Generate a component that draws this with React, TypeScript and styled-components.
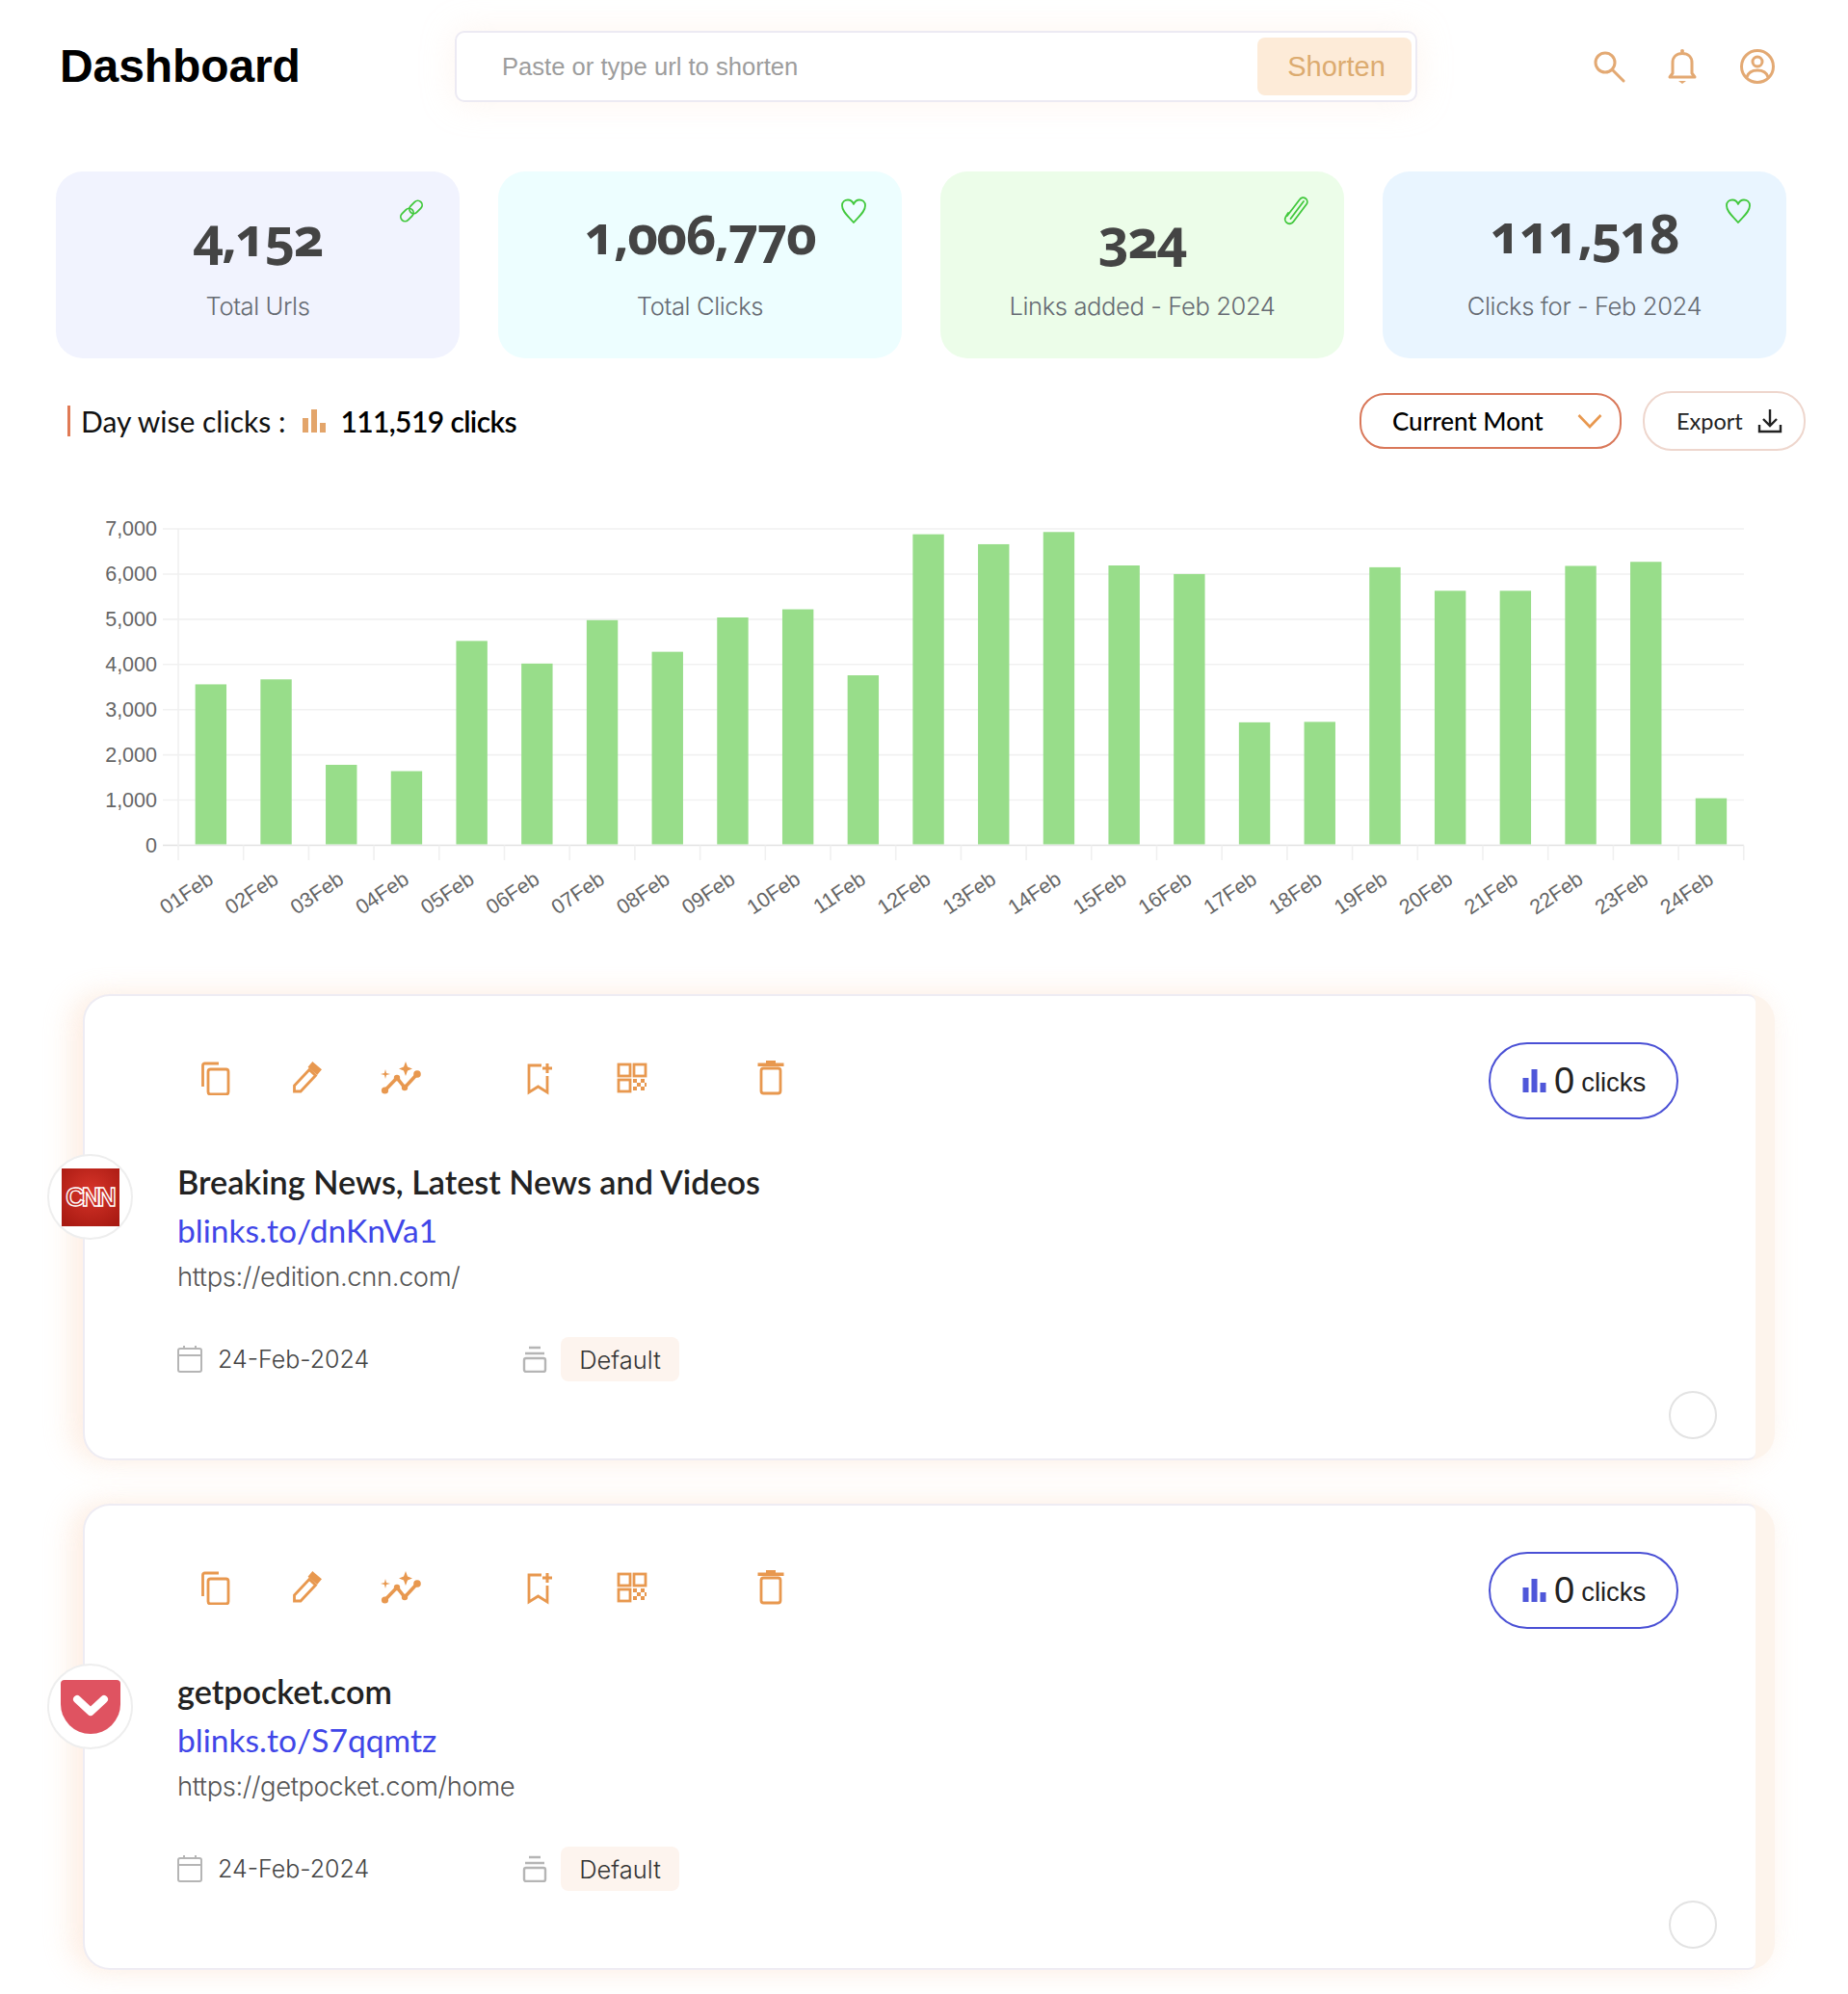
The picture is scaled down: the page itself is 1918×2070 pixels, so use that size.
import React from 'react'
import styled, { createGlobalStyle } from 'styled-components'

const GlobalStyle = createGlobalStyle`
  html, body { margin: 0; padding: 0; background: #fff; }
  * { box-sizing: border-box; }
  body { font-family: "Inter", "Liberation Sans", sans-serif; }
`

const ORANGE = '#e8984f'
const SOFT = '#e3a973'
const GREEN = '#41c83c'

const chartValues = [3560, 3670, 1780, 1640, 4520, 4020, 4980, 4280, 5040, 5220, 3760, 6880, 6660, 6930, 6190, 6000, 2720, 2730, 6150, 5630, 5630, 6180, 6270, 1040]

const stats = [
  { value: '4,152', label: 'Total Urls', bg: '#f1f3fe', icon: 'link', shift: 0 },
  { value: '1,006,770', label: 'Total Clicks', bg: '#edfeff', icon: 'heart', shift: -2 },
  { value: '324', label: 'Links added - Feb 2024', bg: '#ecfde9', icon: 'clip', shift: 2 },
  { value: '111,518', label: 'Clicks for - Feb 2024', bg: '#e9f5ff', icon: 'heart', shift: -3 },
]

const links = [
  { title: 'Breaking News, Latest News and Videos', short: 'blinks.to/dnKnVa1', url: 'https://edition.cnn.com/', logo: 'cnn' },
  { title: 'getpocket.com', short: 'blinks.to/S7qqmtz', url: 'https://getpocket.com/home', logo: 'pocket' },
]

function StatIcon({ kind }: { kind: string }) {
  if (kind === 'link') {
    return (
      <svg width="30" height="30" viewBox="0 0 30 30" fill="none" stroke={GREEN} strokeWidth="1.8">
        <rect x="3" y="14.5" width="15" height="9" rx="4.5" transform="rotate(-45 10.5 19)" />
        <rect x="12" y="6.5" width="15" height="9" rx="4.5" transform="rotate(-45 19.5 11)" />
      </svg>
    )
  }
  if (kind === 'clip') {
    return (
      <svg width="30" height="30" viewBox="0 0 30 30" fill="none" stroke={GREEN} strokeWidth="1.8" strokeLinecap="round">
        <path d="M7 17 L4.5 21 a4.6 4.6 0 0 0 8 5 L26 8 a4 4 0 0 0 -7 -5 L6 20" />
        <path d="M9.5 23 L23 5" />
      </svg>
    )
  }
  return (
    <svg width="30" height="30" viewBox="0 0 30 30" fill="none" stroke={GREEN} strokeWidth="1.8" strokeLinejoin="round">
      <path d="M15 27 C9 20 3 15.5 3 9.5 C3 5.5 6 3.5 9 3.5 C12 3.5 14 5.5 15 8 C16 5.5 18 3.5 21 3.5 C24 3.5 27 5.5 27 9.5 C27 15.5 21 20 15 27 Z" />
    </svg>
  )
}

function BarsIcon({ color, width, height }: { color: string; width: number; height: number }) {
  return (
    <svg width={width} height={height} viewBox="0 0 24 24" fill={color}>
      <rect x="0" y="9" width="6" height="15" />
      <rect x="9" y="0" width="6" height="24" />
      <rect x="18" y="14" width="6" height="10" />
    </svg>
  )
}

function ActionIcon({ kind }: { kind: string }) {
  const common = { width: 34, height: 36, viewBox: '0 0 34 36', fill: 'none', stroke: ORANGE, strokeWidth: 2.8 }
  switch (kind) {
    case 'copy':
      return (
        <svg {...common}>
          <path d="M3.5 27 V5 A2 2 0 0 1 5.5 3 H20" />
          <rect x="9" y="9" width="21" height="26" rx="2.5" />
        </svg>
      )
    case 'edit':
      return (
        <svg {...common}>
          <path d="M4.5 26 L20 9.5 L26.5 15.5 L11 32 H4.5 Z" />
          <path d="M23.5 3 L31 9.5 L28 13 L20.5 6.5 Z" fill={ORANGE} />
        </svg>
      )
    case 'spark':
      return (
        <svg {...common} width={44} viewBox="0 0 44 36" strokeWidth={3.6}>
          <path d="M4.5 31 L17 18 L25 28 L38 14" />
          <circle cx="4.5" cy="31" r="3.6" fill={ORANGE} stroke="none" />
          <circle cx="17" cy="18" r="3.2" fill={ORANGE} stroke="none" />
          <circle cx="25" cy="28" r="3.2" fill={ORANGE} stroke="none" />
          <circle cx="38" cy="14" r="3.8" fill={ORANGE} stroke="none" />
          <path d="M26 1 L28 6.5 L33 8.5 L28 10.5 L26 16 L24 10.5 L19 8.5 L24 6.5 Z" fill={ORANGE} stroke="none" />
          <path d="M5 9 L6 13 L10 14 L6 15 L5 19 L4 15 L0 14 L4 13 Z" fill={ORANGE} stroke="none" />
        </svg>
      )
    case 'bookmark':
      return (
        <svg {...common}>
          <path d="M18 5 H5 V33 L14.5 27 L24 33 V16" />
          <path d="M24 3 V13 M19 8 H29" strokeWidth={3} />
        </svg>
      )
    case 'qr':
      return (
        <svg {...common} width={32} viewBox="0 0 32 36">
          <rect x="2" y="4" width="12" height="12" />
          <rect x="18" y="4" width="12" height="12" />
          <rect x="2" y="20" width="12" height="12" />
          <path d="M17 19h4v4h-4zM25 19h4v4h-4zM21 23h4v4h-4zM17 27h4v4h-4zM25 27h4v4h-4zM29 23h2v4h-2z" fill={ORANGE} stroke="none" />
        </svg>
      )
    default:
      return (
        <svg {...common}>
          <rect x="7" y="8" width="20" height="26" rx="2.5" />
          <rect x="3.5" y="2.5" width="27" height="3.5" fill={ORANGE} stroke="none" />
          <rect x="12" y="0" width="10" height="3" fill={ORANGE} stroke="none" />
        </svg>
      )
  }
}

function CnnLogo() {
  return (
    <svg width="60" height="60" viewBox="0 0 60 60">
      <defs>
        <radialGradient id="cnnRed" cx="50%" cy="40%" r="70%">
          <stop offset="0%" stopColor="#d8352a" />
          <stop offset="100%" stopColor="#a81a12" />
        </radialGradient>
      </defs>
      <rect width="60" height="60" fill="url(#cnnRed)" />
      <text x="29" y="39" textAnchor="middle" fontFamily="Liberation Sans, sans-serif" fontWeight="700" fontSize="27" letterSpacing="-3" fill="none" stroke="#fff" strokeWidth="1.4">
        CNN
      </text>
    </svg>
  )
}

function PocketLogo() {
  return (
    <svg width="62" height="56" viewBox="0 0 62 56">
      <path d="M4 0 H58 A4 4 0 0 1 62 4 V25 A31 31 0 0 1 0 25 V4 A4 4 0 0 1 4 0 Z" fill="#df5361" />
      <path d="M17 20 L31 33 L45 20" fill="none" stroke="#fff" strokeWidth="8" strokeLinecap="round" strokeLinejoin="round" />
    </svg>
  )
}

function Chart() {
  const left = 185
  const step = 67.7
  const top = 549
  const bottom = 877.5
  const y = (v: number) => bottom - (v / 7000) * (bottom - top)
  return (
    <ChartSvg viewBox="0 530 1918 430" width="1918" height="430">
      {[0, 1000, 2000, 3000, 4000, 5000, 6000, 7000].map((v) => (
        <g key={v}>
          <line x1={169} x2={1810} y1={y(v)} y2={y(v)} stroke={v === 0 ? '#e2e2e2' : '#f1f1f1'} strokeWidth="1.6" />
          <text x={163} y={y(v) + 7} textAnchor="end" fontSize="21.5" fill="#666">
            {v.toLocaleString('en-US')}
          </text>
        </g>
      ))}
      {Array.from({ length: 25 }).map((_, i) => (
        <line key={i} x1={left + i * step} x2={left + i * step} y1={i === 0 ? top : bottom} y2={893} stroke="#f0f0f0" strokeWidth="1.6" />
      ))}
      {chartValues.map((v, i) => {
        const cx = left + step * i + step / 2
        const day = String(i + 1).padStart(2, '0')
        return (
          <g key={day}>
            <rect x={cx - 16.2} y={y(v)} width="32.4" height={bottom - y(v) - 1} fill="#98dd8a" />
            <text x={cx + 4} y={916} textAnchor="end" fontSize="21.5" fill="#666" transform={`rotate(-34 ${cx + 4} 916)`}>
              {day}Feb
            </text>
          </g>
        )
      })}
    </ChartSvg>
  )
}

export default function App() {
  return (
    <Page>
      <GlobalStyle />
      <Header>
        <Title>Dashboard</Title>
        <SearchBox>
          <Placeholder>Paste or type url to shorten</Placeholder>
          <ShortenButton>Shorten</ShortenButton>
        </SearchBox>
        <HeaderIcons>
          <svg width="34" height="34" viewBox="0 0 34 34" fill="none" stroke={SOFT} strokeWidth="3" strokeLinecap="round">
            <circle cx="13" cy="13" r="10" />
            <path d="M20.5 20.5 L32 32" />
          </svg>
          <svg width="32" height="38" viewBox="0 0 32 38" fill="none" stroke={SOFT} strokeWidth="3" strokeLinejoin="round">
            <path d="M3 30 H29 L26 26 V15 C26 9 22 5.5 16 5.5 C10 5.5 6 9 6 15 V26 Z" />
            <circle cx="16" cy="3" r="2" fill={SOFT} stroke="none" />
            <path d="M12 34 H20 L16 37 Z" fill={SOFT} stroke="none" />
          </svg>
          <svg width="38" height="38" viewBox="0 0 38 38" fill="none" stroke={SOFT} strokeWidth="3">
            <circle cx="19" cy="19" r="16.5" />
            <circle cx="19" cy="14" r="5" />
            <path d="M8 30 C10 24 14 23 19 23 C24 23 28 24 30 30" />
          </svg>
        </HeaderIcons>
      </Header>

      <StatGrid>
        {stats.map((s) => (
          <StatCard key={s.label} $bg={s.bg}>
            <StatIconSlot>
              <StatIcon kind={s.icon} />
            </StatIconSlot>
            <StatValue $shift={s.shift}>{s.value}</StatValue>
            <StatLabel>{s.label}</StatLabel>
          </StatCard>
        ))}
      </StatGrid>

      <ChartHead>
        <ChartTitle>
          <span>Day wise clicks :</span>
          <BarsIcon color="#e3a56b" width={24} height={24} />
          <strong>111,519 clicks</strong>
        </ChartTitle>
        <ChartActions>
          <MonthSelect>
            Current Mont
            <svg width="26" height="16" viewBox="0 0 26 16" fill="none" stroke={ORANGE} strokeWidth="2.6">
              <path d="M1.5 2 L13 14 L24.5 2" />
            </svg>
          </MonthSelect>
          <ExportButton>
            Export
            <svg width="26" height="26" viewBox="0 0 26 26" fill="none" stroke="#222" strokeWidth="2.4">
              <path d="M13 1 V17 M6 11 L13 18 L20 11 M2 17 V24 H24 V17" />
            </svg>
          </ExportButton>
        </ChartActions>
      </ChartHead>

      <Chart />

      <LinkList>
        {links.map((l) => (
          <LinkCard key={l.short}>
            <LinkInner>
              <Avatar>{l.logo === 'cnn' ? <CnnLogo /> : <PocketLogo />}</Avatar>
              <TopRow>
                <Actions>
                  <ActionSlot $w={94}><ActionIcon kind="copy" /></ActionSlot>
                  <ActionSlot $w={94}><ActionIcon kind="edit" /></ActionSlot>
                  <ActionSlot $w={149}><ActionIcon kind="spark" /></ActionSlot>
                  <ActionSlot $w={96}><ActionIcon kind="bookmark" /></ActionSlot>
                  <ActionSlot $w={143}><ActionIcon kind="qr" /></ActionSlot>
                  <ActionSlot $w={34}><ActionIcon kind="trash" /></ActionSlot>
                </Actions>
                <ClicksPill>
                  <BarsIcon color="#4f57d9" width={25} height={24} />
                  <ClickCount>0</ClickCount>
                  <ClickWord>clicks</ClickWord>
                </ClicksPill>
              </TopRow>
              <LinkTitle>{l.title}</LinkTitle>
              <ShortLink>{l.short}</ShortLink>
              <LongUrl>{l.url}</LongUrl>
              <MetaRow>
                <DateCell>
                  <svg width="26" height="28" viewBox="0 0 26 28" fill="none" stroke="#b5b5b5" strokeWidth="2">
                    <rect x="1" y="3" width="24" height="24" rx="2" />
                    <path d="M1 10 H25 M7 0 V3 M19 0 V3" />
                  </svg>
                  <DateText>24-Feb-2024</DateText>
                </DateCell>
                <svg width="26" height="28" viewBox="0 0 26 28" fill="none" stroke="#b5b5b5" strokeWidth="2.4">
                  <rect x="2" y="13" width="22" height="14" rx="2" />
                  <path d="M3 8 H23 M7 2 H19" />
                </svg>
                <Chip>Default</Chip>
              </MetaRow>
              <RadioDot />
            </LinkInner>
          </LinkCard>
        ))}
      </LinkList>
    </Page>
  )
}

const Page = styled.div`
  width: 1918px;
  height: 2070px;
  overflow: hidden;
  background: #fff;
`

const Header = styled.header`
  display: flex;
  align-items: center;
  height: 74px;
  margin-top: 32px;
  padding-left: 62px;
`

const Title = styled.h1`
  width: 410px;
  margin: -2px 0 0;
  font-family: "Liberation Sans", sans-serif;
  font-size: 48px;
  font-weight: 700;
  letter-spacing: -0.1px;
  color: #000;
`

const SearchBox = styled.div`
  width: 999px;
  height: 74px;
  display: flex;
  align-items: center;
  justify-content: space-between;
  padding: 0 4px 0 47px;
  background: #fff;
  border: 2px solid #eceaf3;
  border-radius: 10px;
  box-shadow: 0 0 34px rgba(253, 226, 208, 0.35);
`

const Placeholder = styled.span`
  font-family: "Liberation Sans", sans-serif;
  font-size: 25.6px;
  color: #9d9d9d;
`

const ShortenButton = styled.div`
  width: 160px;
  height: 60px;
  display: flex;
  align-items: center;
  justify-content: center;
  padding-left: 4px;
  background: #fdebd8;
  border-radius: 8px;
  font-family: "Liberation Sans", sans-serif;
  font-size: 29px;
  color: #dcab70;
`

const HeaderIcons = styled.div`
  display: flex;
  align-items: center;
  gap: 43px;
  margin-left: 182px;
`

const StatGrid = styled.section`
  display: grid;
  grid-template-columns: repeat(4, 419px);
  gap: 40px;
  margin-top: 72px;
  padding-left: 58px;
`

const StatCard = styled.div<{ $bg: string }>`
  position: relative;
  height: 194px;
  display: flex;
  flex-direction: column;
  align-items: center;
  padding-top: 33px;
  background: ${(p) => p.$bg};
  border-radius: 28px;
`

const StatIconSlot = styled.div`
  position: absolute;
  top: 26px;
  right: 35px;
  line-height: 0;
`

const StatValue = styled.div<{ $shift: number }>`
  height: 68px;
  line-height: 68px;
  transform: translateY(${(p) => p.$shift}px);
  font-family: "Open Sans", sans-serif;
  font-feature-settings: "onum";
  font-size: 55px;
  font-weight: 700;
  letter-spacing: -1.6px;
  color: #444;
`

const StatLabel = styled.div`
  margin-top: 23px;
  font-family: "Inter", sans-serif;
  font-size: 25.6px;
  font-weight: 300;
  letter-spacing: -0.4px;
  color: #666b73;
`

const ChartHead = styled.section`
  display: flex;
  align-items: center;
  justify-content: space-between;
  height: 62px;
  margin-top: 34px;
  padding: 0 44px 0 70px;
`

const ChartTitle = styled.div`
  display: flex;
  align-items: center;
  height: 32px;
  padding-left: 11px;
  border-left: 3px solid #e07a55;
  font-family: "Lato", sans-serif;
  font-size: 30px;
  color: #111;
  svg { margin: 0 15px 0 18px; }
  strong { font-weight: 600; letter-spacing: -0.6px; color: #000; }
`

const ChartActions = styled.div`
  display: flex;
  align-items: center;
  gap: 22px;
`

const MonthSelect = styled.div`
  width: 272px;
  height: 58px;
  display: flex;
  align-items: center;
  justify-content: space-between;
  padding: 0 18px 0 32px;
  border: 2px solid #d9785a;
  border-radius: 26px;
  font-family: "Lato", sans-serif;
  font-size: 26px;
  font-weight: 500;
  color: #000;
`

const ExportButton = styled.div`
  width: 169px;
  height: 62px;
  display: flex;
  align-items: center;
  justify-content: space-between;
  padding: 0 22px 0 33px;
  border: 2px solid #eed6cd;
  border-radius: 30px;
  font-family: "Lato", sans-serif;
  font-size: 23.5px;
  color: #222;
`

const ChartSvg = styled.svg`
  display: block;
  margin-top: 62px;
  font-family: "Liberation Sans", sans-serif;
`

const LinkList = styled.section`
  display: flex;
  flex-direction: column;
  gap: 45px;
  margin-top: 72px;
  padding-left: 86px;
`

const LinkCard = styled.article`
  width: 1756px;
  height: 484px;
  padding-right: 20px;
  background: #fdf4ec;
  border-radius: 28px;
  box-shadow: -14px 0 30px -2px rgba(253, 222, 200, 0.45), 0 0 28px rgba(253, 232, 220, 0.28);
`

const LinkInner = styled.div`
  position: relative;
  height: 100%;
  padding: 46px 0 0 96px;
  background: #fff;
  border: 2px solid #eeecf3;
  border-right: 0;
  border-radius: 28px 8px 8px 28px;
`

const Avatar = styled.div`
  position: absolute;
  left: -39px;
  top: 164px;
  width: 89px;
  height: 89px;
  display: flex;
  align-items: center;
  justify-content: center;
  background: #fff;
  border: 2px solid #eeeeee;
  border-radius: 50%;
`

const TopRow = styled.div`
  display: flex;
  align-items: center;
  justify-content: space-between;
  height: 84px;
  padding: 0 80px 0 23px;
`

const Actions = styled.div`
  display: flex;
  align-items: center;
  margin-bottom: 6px;
`

const ActionSlot = styled.div<{ $w: number }>`
  width: ${(p) => p.$w}px;
  line-height: 0;
`

const ClicksPill = styled.div`
  width: 197px;
  height: 80px;
  display: flex;
  align-items: center;
  padding-left: 33px;
  border: 2px solid #4a50d5;
  border-radius: 40px;
  font-family: "Liberation Sans", sans-serif;
  color: #222;
`

const ClickCount = styled.span`
  margin-left: 8px;
  font-size: 38px;
`

const ClickWord = styled.span`
  margin-left: 7px;
  margin-top: 4px;
  font-size: 27.5px;
`

const LinkTitle = styled.div`
  margin-top: 41px;
  height: 44px;
  line-height: 44px;
  font-family: "Lato", sans-serif;
  font-size: 34.2px;
  font-weight: 600;
  color: #222;
`

const ShortLink = styled.div`
  margin-top: 6px;
  height: 44px;
  line-height: 44px;
  font-family: "Lato", sans-serif;
  font-size: 33.6px;
  color: #4046e8;
`

const LongUrl = styled.div`
  margin-top: 7px;
  height: 38px;
  line-height: 38px;
  font-family: "Inter", sans-serif;
  font-size: 27.4px;
  font-weight: 300;
  letter-spacing: -0.4px;
  color: #555;
`

const MetaRow = styled.div`
  display: flex;
  align-items: center;
  margin-top: 44px;
  height: 46px;
`

const DateCell = styled.div`
  width: 358px;
  display: flex;
  align-items: center;
  gap: 16px;
`

const DateText = styled.span`
  font-family: "Inter", sans-serif;
  font-size: 25px;
  font-weight: 300;
  color: #444;
`

const Chip = styled.div`
  margin-left: 14px;
  width: 123px;
  height: 46px;
  display: flex;
  align-items: center;
  justify-content: center;
  background: #fdf4ee;
  border-radius: 8px;
  font-family: "Inter", sans-serif;
  font-size: 25.5px;
  font-weight: 300;
  color: #333;
`

const RadioDot = styled.div`
  position: absolute;
  right: 40px;
  bottom: 20px;
  width: 50px;
  height: 50px;
  border: 2px solid #e3e3e3;
  border-radius: 50%;
`
